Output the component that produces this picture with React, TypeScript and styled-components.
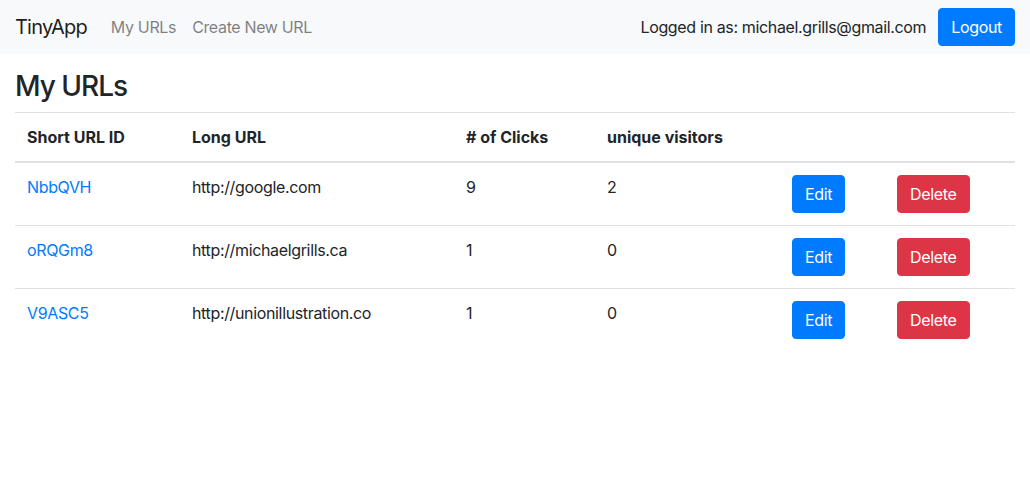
import React from "react";
import styled, { createGlobalStyle } from "styled-components";

const Global = createGlobalStyle`
  body {
    margin: 0;
    font-family: Inter, "Noto Sans", "Liberation Sans", sans-serif;
    font-size: 16px;
    line-height: 1.5;
    letter-spacing: -0.022em;
    color: #212529;
    background: #fff;
  }
  * { box-sizing: border-box; }
`;

const Navbar = styled.nav`
  display: flex;
  align-items: center;
  justify-content: space-between;
  height: 54px;
  padding: 0 15px;
  background: #f8f9fa;
`;

const NavLeft = styled.div`
  display: flex;
  align-items: center;
`;

const Brand = styled.a`
  font-size: 20px;
  line-height: 30px;
  letter-spacing: -0.04em;
  color: rgba(0, 0, 0, 0.9);
  margin-right: 16px;
  text-decoration: none;
`;

const NavLink = styled.a`
  padding: 8px;
  color: rgba(0, 0, 0, 0.5);
  text-decoration: none;
`;

const NavRight = styled.div`
  display: flex;
  align-items: center;
  gap: 12px;
`;

const UserText = styled.span`
  color: #212529;
`;

const Button = styled.button<{ $variant: "primary" | "danger" }>`
  font-family: inherit;
  font-size: 16px;
  line-height: 24px;
  letter-spacing: -0.02em;
  height: 38px;
  padding: 6px 12px;
  border: 1px solid ${(p) => (p.$variant === "primary" ? "#007bff" : "#dc3545")};
  background: ${(p) => (p.$variant === "primary" ? "#007bff" : "#dc3545")};
  color: #fff;
  border-radius: 4px;
  cursor: pointer;
`;

const Main = styled.main`
  padding: 16px 15px 0;
`;

const Title = styled.h3`
  margin: 0 0 8px;
  font-size: 28px;
  font-weight: 500;
  line-height: 1.2;
  letter-spacing: -0.036em;
`;

const Table = styled.table`
  width: 100%;
  border-collapse: collapse;
  table-layout: fixed;
`;

const Th = styled.th`
  text-align: left;
  font-weight: 700;
  letter-spacing: 0;
  padding: 12px;
  border-top: 1px solid #dee2e6;
  border-bottom: 2px solid #dee2e6;
  vertical-align: bottom;
`;

const Td = styled.td`
  padding: 12px;
  border-top: 1px solid #dee2e6;
  vertical-align: top;
`;

const Row = styled.tr`
  &:first-child td {
    border-top: none;
  }
`;

const ShortLink = styled.a`
  color: #007bff;
  text-decoration: none;
`;

const widths = [165, 274, 141, 185, 105, 130];

const urls = [
  { id: "NbbQVH", long: "http://google.com", clicks: 9, unique: 2 },
  { id: "oRQGm8", long: "http://michaelgrills.ca", clicks: 1, unique: 0 },
  { id: "V9ASC5", long: "http://unionillustration.co", clicks: 1, unique: 0 },
];

export default function App() {
  return (
    <>
      <Global />
      <Navbar>
        <NavLeft>
          <Brand href="#">TinyApp</Brand>
          <NavLink href="#">My URLs</NavLink>
          <NavLink href="#">Create New URL</NavLink>
        </NavLeft>
        <NavRight>
          <UserText>Logged in as: michael.grills@gmail.com</UserText>
          <Button $variant="primary">Logout</Button>
        </NavRight>
      </Navbar>
      <Main>
        <Title>My URLs</Title>
        <Table>
          <colgroup>
            {widths.map((w, i) => (
              <col key={i} style={{ width: w }} />
            ))}
          </colgroup>
          <thead>
            <tr>
              <Th>Short URL ID</Th>
              <Th>Long URL</Th>
              <Th># of Clicks</Th>
              <Th>unique visitors</Th>
              <Th></Th>
              <Th></Th>
            </tr>
          </thead>
          <tbody>
            {urls.map((u) => (
              <Row key={u.id}>
                <Td>
                  <ShortLink href="#">{u.id}</ShortLink>
                </Td>
                <Td>{u.long}</Td>
                <Td>{u.clicks}</Td>
                <Td>{u.unique}</Td>
                <Td>
                  <Button $variant="primary">Edit</Button>
                </Td>
                <Td>
                  <Button $variant="danger">Delete</Button>
                </Td>
              </Row>
            ))}
          </tbody>
        </Table>
      </Main>
    </>
  );
}
